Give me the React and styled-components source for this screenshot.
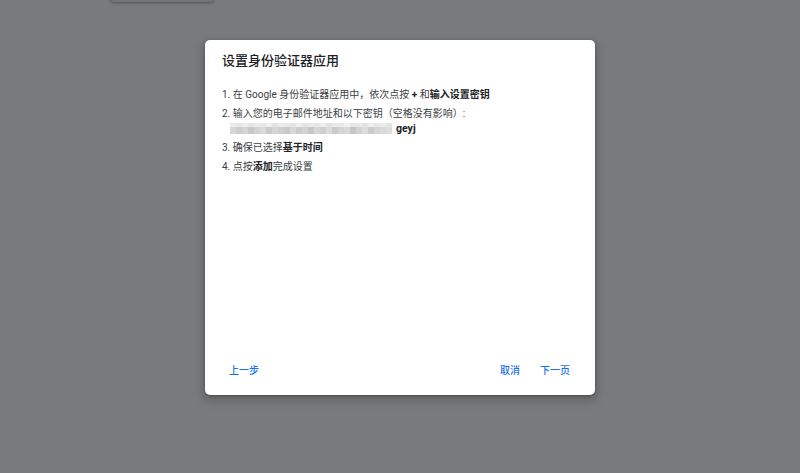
import styled, { createGlobalStyle } from "styled-components";

const GlobalStyle = createGlobalStyle`
  html, body {
    margin: 0;
    padding: 0;
    height: 100%;
    background: #fff;
    font-family: Roboto, "Noto Sans CJK SC", sans-serif;
  }
  #root {
    height: 100%;
  }
`;

const Page = styled.div`
  position: relative;
  height: 473px;
  overflow: hidden;
  background: #fff;
`;

const PageButton = styled.div`
  margin: -30px 0 0 110px;
  width: 104px;
  height: 32px;
  border-radius: 4px;
  background: #f1f3f4;
  box-shadow: 0 1px 3px rgba(60, 64, 67, 0.5);
`;

const Scrim = styled.div`
  position: absolute;
  inset: 0;
  background: rgba(32, 33, 36, 0.6);
  display: flex;
  justify-content: center;
  align-items: flex-start;
  padding-top: 40px;
`;

const Dialog = styled.div`
  width: 390px;
  height: 355px;
  background: #fff;
  border-radius: 5px;
  box-shadow: 0 4px 8px 3px rgba(0, 0, 0, 0.15), 0 1px 3px rgba(0, 0, 0, 0.3);
  display: flex;
  flex-direction: column;
  box-sizing: border-box;
`;

const Content = styled.div`
  flex: 1;
  padding: 12px 17px 0;
`;

const Title = styled.h2`
  margin: 0 0 17px;
  font-size: 13px;
  line-height: 18px;
  font-weight: 500;
  color: #202124;
`;

const Steps = styled.ol`
  margin: 0;
  padding: 0;
  list-style: none;
`;

const Step = styled.li`
  font-size: 10px;
  line-height: 15px;
  color: #3c4043;
  margin-bottom: 4px;
`;

const Strong = styled.b`
  font-weight: 700;
  color: #202124;
`;

const KeyLine = styled.div`
  display: flex;
  align-items: center;
  gap: 4px;
  height: 15px;
  padding-left: 8px;
  font-size: 10.5px;
`;

const Mosaic = styled.span`
  display: inline-grid;
  grid-template-columns: repeat(27, 6px);
  grid-template-rows: 4px 7px;
  filter: blur(0.6px);
`;

const Cell = styled.span`
  background: ${(p) => p.$shade};
`;

const Actions = styled.div`
  display: flex;
  align-items: center;
  padding: 0 17px 10px 16px;
`;

const Spacer = styled.div`
  flex: 1;
`;

const TextButton = styled.button`
  height: 32px;
  padding: 0 8px;
  margin-left: ${(p) => (p.$first ? "0" : "4px")};
  border: none;
  background: none;
  border-radius: 4px;
  font-family: inherit;
  font-size: 10px;
  font-weight: 500;
  color: #1a73e8;
  cursor: pointer;
`;

const topShades = [
  "#ececec", "#e6e6e6", "#ededed", "#e4e4e4", "#ebebeb", "#e8e8e8", "#efefef",
  "#e3e3e3", "#ebebeb", "#e9e9e9", "#e5e5e5", "#eeeeee", "#e4e4e4", "#eaeaea",
  "#e7e7e7", "#ededed", "#e2e2e2", "#eaeaea", "#e8e8e8", "#f0f0f0", "#e6e6e6",
  "#e9e9e9", "#e3e3e3", "#ededed", "#e7e7e7", "#ebebeb", "#e5e5e5",
];
const bottomShades = [
  "#d6d6d6", "#cdcdcd", "#d4d4d4", "#c8c8c8", "#d2d2d2", "#dadada", "#cbcbcb",
  "#d5d5d5", "#cfcfcf", "#c9c9c9", "#d8d8d8", "#cccccc", "#d3d3d3", "#c7c7c7",
  "#d6d6d6", "#cecece", "#dbdbdb", "#cacaca", "#d4d4d4", "#d9d9d9", "#c6c6c6",
  "#d1d1d1", "#dcdcdc", "#cbcbcb", "#d5d5d5", "#d9d9d9", "#dedede",
];

const App = () => {
  return (
    <>
      <GlobalStyle />
      <Page>
        <PageButton />
        <Scrim>
          <Dialog>
            <Content>
              <Title>设置身份验证器应用</Title>
              <Steps>
                <Step>
                  1. 在 Google 身份验证器应用中，依次点按 <Strong>+</Strong> 和
                  <Strong>输入设置密钥</Strong>
                </Step>
                <Step>
                  2. 输入您的电子邮件地址和以下密钥（空格没有影响）:
                  <KeyLine>
                    <Mosaic>
                      {topShades.map((s, i) => (
                        <Cell key={"t" + i} $shade={s} />
                      ))}
                      {bottomShades.map((s, i) => (
                        <Cell key={"b" + i} $shade={s} />
                      ))}
                    </Mosaic>
                    <Strong>geyj</Strong>
                  </KeyLine>
                </Step>
                <Step>
                  3. 确保已选择<Strong>基于时间</Strong>
                </Step>
                <Step>
                  4. 点按<Strong>添加</Strong>完成设置
                </Step>
              </Steps>
            </Content>
            <Actions>
              <TextButton $first>上一步</TextButton>
              <Spacer />
              <TextButton $first>取消</TextButton>
              <TextButton>下一页</TextButton>
            </Actions>
          </Dialog>
        </Scrim>
      </Page>
    </>
  );
};

export default App;
